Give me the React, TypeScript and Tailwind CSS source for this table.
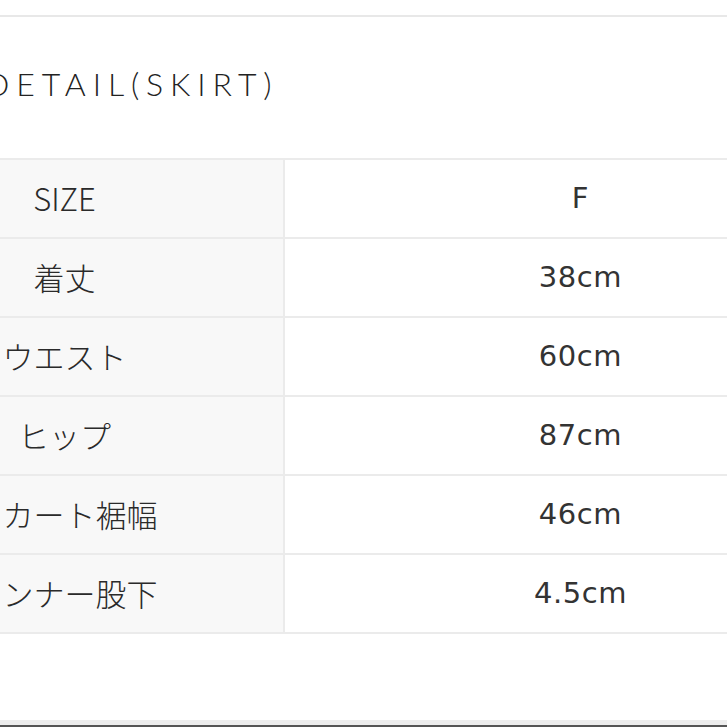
import React from "react";

const rows: [string, string][] = [
  ["SIZE", "F"],
  ["着丈", "38cm"],
  ["ウエスト", "60cm"],
  ["ヒップ", "87cm"],
  ["スカート裾幅", "46cm"],
  ["インナー股下", "4.5cm"],
];

export default function App() {
  return (
    <div className="w-[727px] h-[727px] bg-white overflow-hidden flex flex-col">
      <div className="h-[15px] shrink-0" />
      <div className="h-[2px] bg-[#e8e8e8] shrink-0" />
      <div className="h-[141px] shrink-0 flex items-center ml-[-15px]">
        <h1
          className="text-[32px] font-light tracking-[0.215em] text-[#222] leading-none pb-[8px]"
          style={{ fontFamily: "Lato, 'Noto Sans', sans-serif" }}
        >
          DETAIL(SKIRT)
        </h1>
      </div>
      <div className="ml-[-154px] w-[1030px] shrink-0 border-t-2 border-[#ebebeb]">
        {rows.map(([label, value]) => (
          <div key={label} className="flex h-[79px] border-b-2 border-[#ebebeb]">
            <div
              className="w-[439px] shrink-0 bg-[#f8f8f8] border-r-2 border-[#ebebeb] flex items-center justify-center text-[31px] font-light text-[#2a2a2a]"
              style={{ fontFamily: "'Noto Sans CJK JP', sans-serif" }}
            >
              {label}
            </div>
            <div
              className="flex-1 flex items-center justify-center text-[29px] tracking-[0.02em] text-[#333]"
              style={{ fontFamily: "'DejaVu Sans', sans-serif" }}
            >
              {value}
            </div>
          </div>
        ))}
      </div>
      <div className="flex-1" />
      <div className="h-[5px] bg-[#ededed] shrink-0" />
      <div className="h-[2px] bg-[#555] shrink-0" />
    </div>
  );
}
